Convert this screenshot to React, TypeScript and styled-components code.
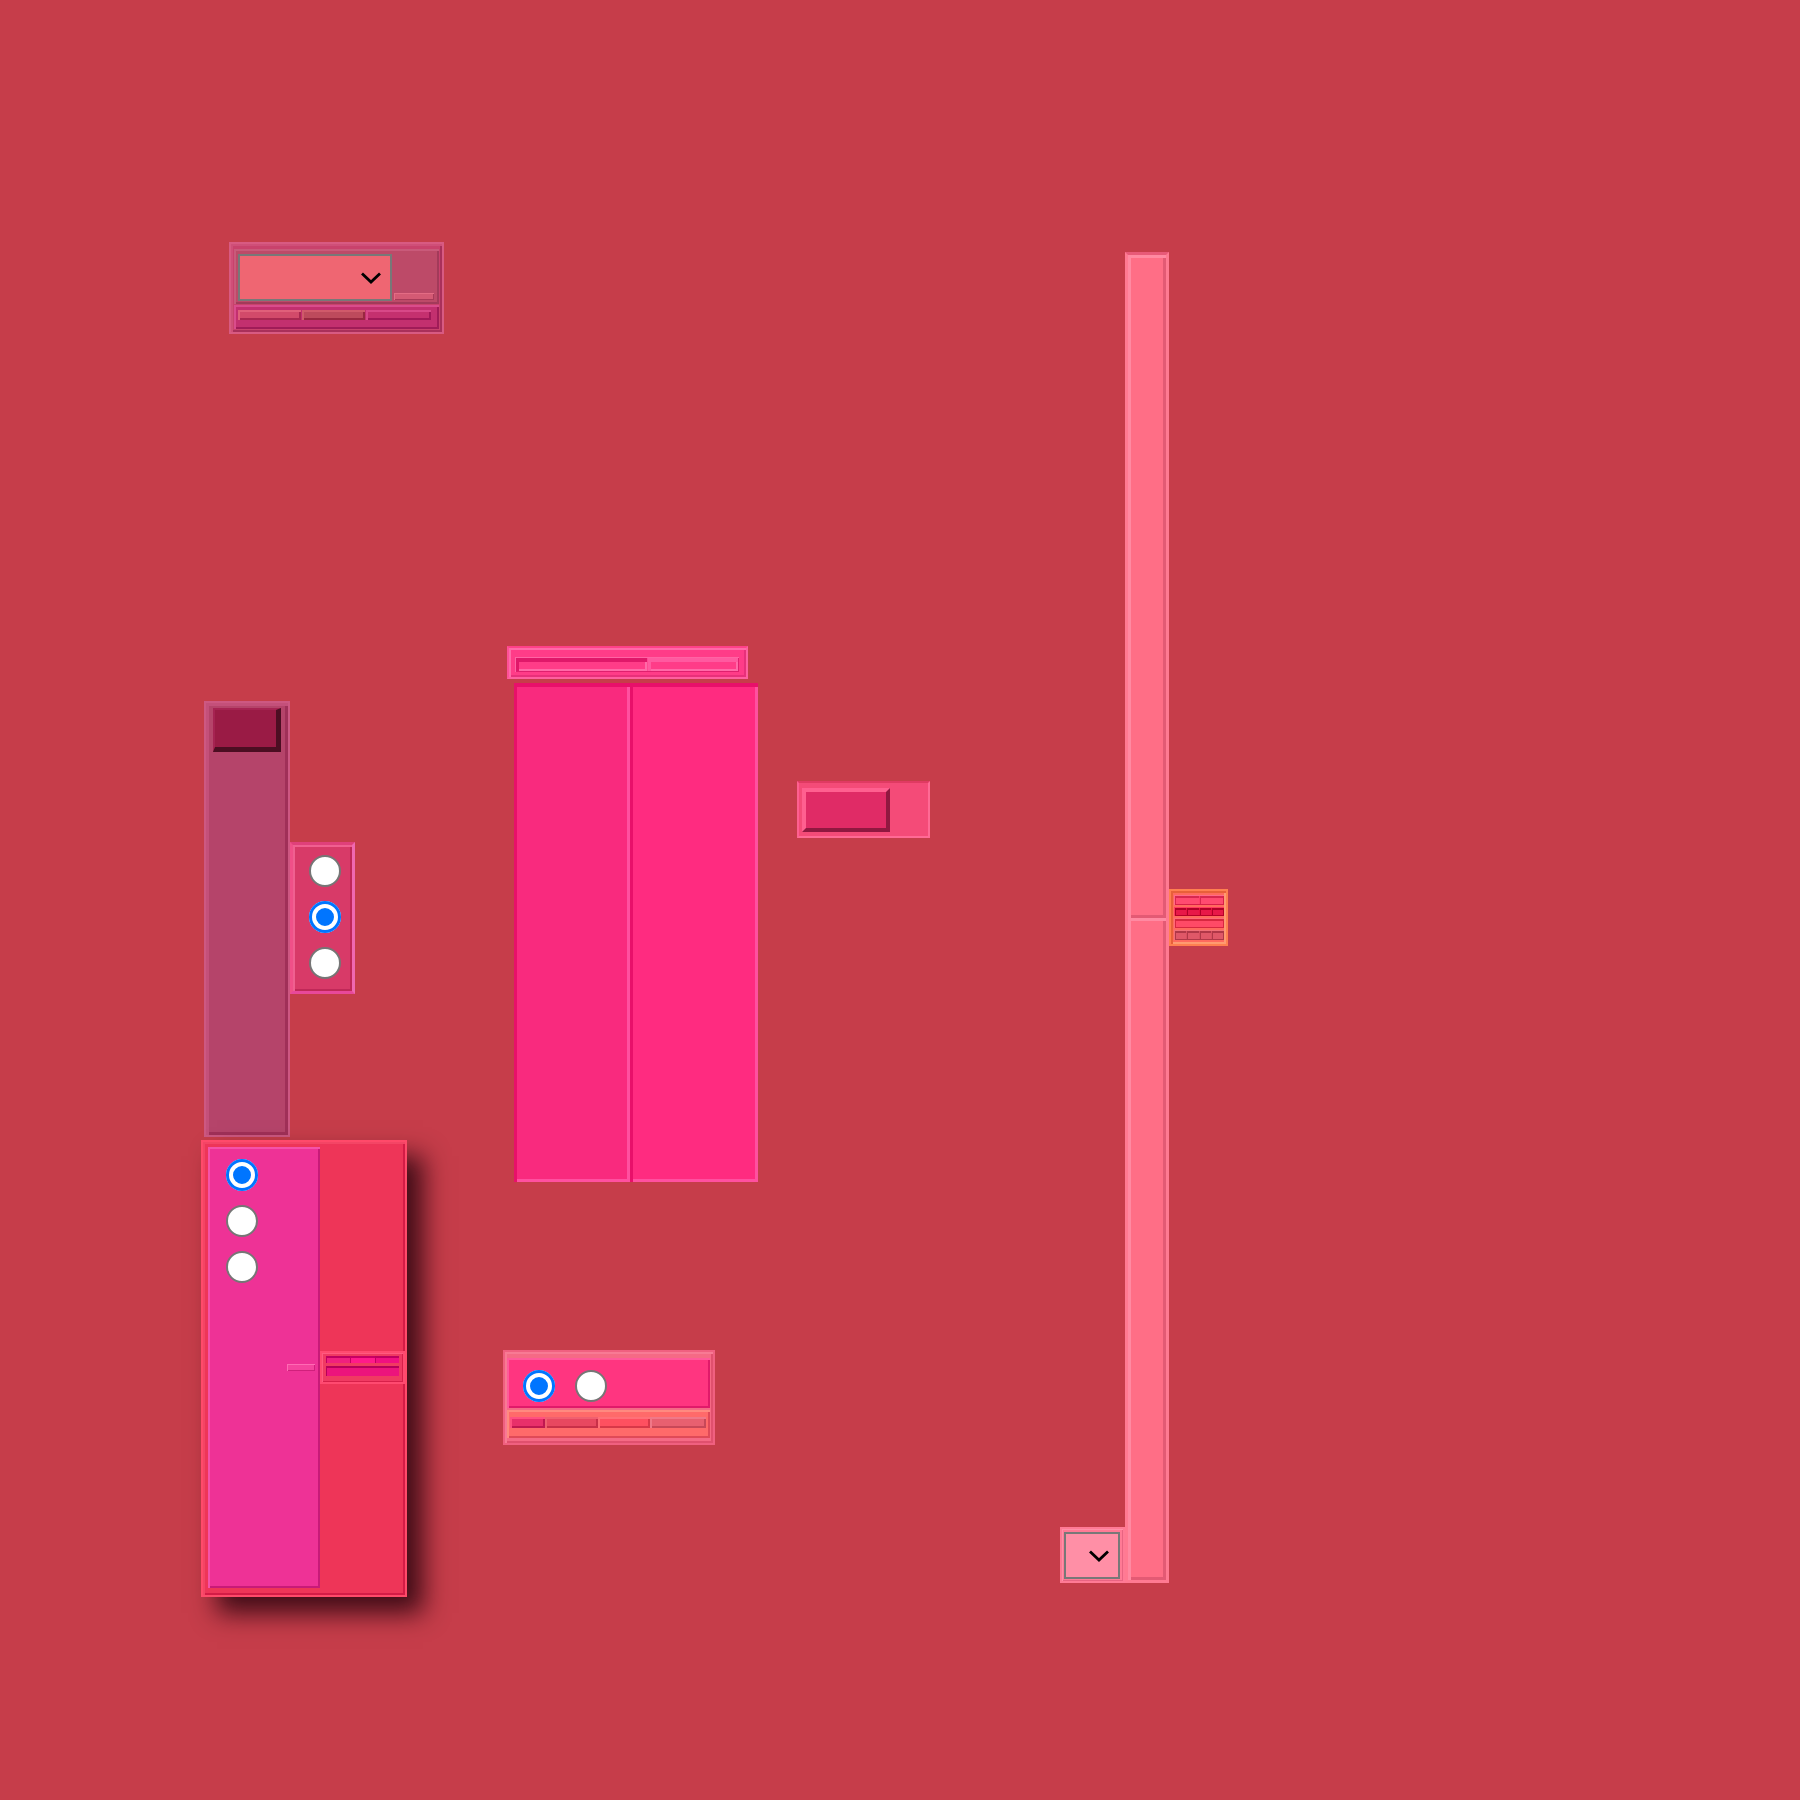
import React from "react";
import styled, { createGlobalStyle, css } from "styled-components";

const bevel = (light: string, dark: string, w = 2) => css`
  box-shadow: inset ${w}px ${w}px 0 ${light}, inset -${w}px -${w}px 0 ${dark};
`;

const Global = createGlobalStyle`
  html, body { margin: 0; padding: 0; background: #c63d4a; }
  body { font-family: "Liberation Sans", Arial, sans-serif; }
`;

const Canvas = styled.div`
  position: relative;
  width: 1800px;
  height: 1800px;
  background: #c63d4a;
  overflow: hidden;
`;

const Spot = styled.div<{ $x: number; $y: number }>`
  position: absolute;
  left: ${(p) => p.$x}px;
  top: ${(p) => p.$y}px;
`;

/* ---------- shared bits ---------- */
const Radio = styled.span<{ $on?: boolean }>`
  box-sizing: border-box;
  display: block;
  flex: none;
  width: 32px;
  height: 32px;
  border-radius: 50%;
  ${(p) =>
    p.$on
      ? css`
          background: #0075ff;
          box-shadow: inset 0 0 0 3px #0075ff, inset 0 0 0 7px #ffffff;
        `
      : css`
          background: #ffffff;
          border: 2px solid #767676;
        `}
`;

const SelectBox = styled.div<{ $w: number; $bg: string }>`
  box-sizing: border-box;
  flex: none;
  width: ${(p) => p.$w}px;
  border: 2px solid #787878;
  background: ${(p) => p.$bg};
  display: flex;
  align-items: center;
  justify-content: flex-end;
  padding-right: 8px;
`;

const Chip = styled.div<{ $grow: number; $bg: string; $light: string; $dark: string }>`
  flex: ${(p) => p.$grow} 1 0;
  background: ${(p) => p.$bg};
  ${(p) => bevel(p.$light, p.$dark, 2)}
`;

const Chevron = () => (
  <svg width="22" height="13" viewBox="0 0 22 13">
    <polyline points="2,2.5 11,11 20,2.5" fill="none" stroke="#000" strokeWidth="2.8" />
  </svg>
);

/* ---------- top-left filter card ---------- */
const FilterCard = styled.div`
  box-sizing: border-box;
  width: 215px;
  height: 92px;
  border: 2px solid #d85a82;
  background: #c9426c;
  ${bevel("#cf4f78", "#a9305a", 2)}
  padding: 5px 3px 3px 3px;
  display: flex;
  flex-direction: column;
  gap: 1px;
`;

const FilterTop = styled.div`
  flex: 1;
  display: flex;
  background: #bd4a68;
  ${bevel("#c95a7a", "#a33a5a", 2)}
  padding: 5px 3px 3px 4px;
`;

const FilterSide = styled.div`
  flex: 1;
  display: flex;
  align-items: flex-end;
  padding: 0 2px 1px 2px;
`;

const SideBar = styled.div`
  flex: 1;
  height: 7px;
  background: #d45a74;
  ${bevel("#e46c84", "#a83a58", 1)}
`;

const FilterBottom = styled.div`
  flex: none;
  height: 24px;
  box-sizing: border-box;
  background: #c3306f;
  ${bevel("#da4c8c", "#a01c58", 2)}
  padding: 5px 8px 0 4px;
  display: flex;
  align-items: flex-start;
  gap: 1px;
  & > div { height: 10px; }
`;

/* ---------- left slider track ---------- */
const TrackFrame = styled.div`
  box-sizing: border-box;
  width: 86px;
  height: 436px;
  border: 2px solid #cd5882;
  background: #b5446a;
  ${bevel("#c4507a", "#a03058", 3)}
  padding: 5px 7px;
`;

const TrackThumb = styled.div`
  box-sizing: border-box;
  height: 44px;
  background: #9a1b45;
  border-style: solid;
  border-width: 2px 5px 5px 2px;
  border-color: #a62352 #4c0e22 #4c0e22 #a62352;
`;

/* ---------- radio column panel ---------- */
const RadioPanel = styled.div`
  box-sizing: border-box;
  width: 65px;
  height: 152px;
  background: #d83a68;
  border: 3px solid;
  border-color: #e0407a #f068b0 #e8489a #f05088;
  ${bevel("#f06090", "#c02858", 2)}
  padding: 10px 0 0 5px;
  display: flex;
  flex-direction: column;
  align-items: center;
  gap: 14px;
`;

/* ---------- bottom-left drawer ---------- */
const Drawer = styled.div`
  box-sizing: border-box;
  width: 206px;
  height: 457px;
  background: #ee3558;
  border: 2px solid #ff4a6a;
  box-shadow: inset 2px 2px 0 #f44565, inset -2px -2px 0 #d41c46,
    16px 16px 24px rgba(40, 4, 14, 0.85);
  padding: 5px 0 7px 5px;
  display: flex;
`;

const DrawerList = styled.div`
  box-sizing: border-box;
  flex: none;
  width: 112px;
  background: #ee3296;
  ${bevel("#f552a8", "#c81a78", 2)}
  display: flex;
  justify-content: space-between;
  align-items: center;
  padding: 0 5px 0 18px;
`;

const RadioStack = styled.div`
  align-self: flex-start;
  margin-top: 12px;
  display: flex;
  flex-direction: column;
  gap: 14px;
`;

const Nub = styled.div`
  width: 28px;
  height: 7px;
  background: #f5449e;
  ${bevel("#ff6ab4", "#d0207c", 1)}
`;

const DrawerSide = styled.div`
  flex: 1;
  display: flex;
  align-items: center;
`;

const DrawerTray = styled.div`
  box-sizing: border-box;
  flex: 1;
  height: 33px;
  background: #f03a62;
  border: 2px solid #ff4a70;
  ${bevel("#ff5a80", "#d8204a", 1)}
  padding: 3px 4px;
  display: flex;
  flex-direction: column;
  gap: 3px;
`;

const TrayRow = styled.div<{ $h: number }>`
  height: ${(p) => p.$h}px;
  display: flex;
  background: #e8107a;
  ${bevel("#ff3a9a", "#b8005c", 1)}
`;

/* ---------- center rail ---------- */
const Rail = styled.div`
  box-sizing: border-box;
  width: 241px;
  height: 33px;
  background: #ff3c88;
  border: 2px solid;
  border-color: #ff4088 #ff60a0 #ff60a0 #ff5098;
  ${bevel("#ff6aa8", "#e8307a", 2)}
  padding: 9px 7px 5px 6px;
  display: flex;
`;

const RailStrip = styled.div`
  flex: 1;
  display: flex;
  background: #ff4a92;
  ${bevel("#ff64a4", "#e0206e", 1)}
  padding: 1px;
  gap: 1px;
`;

const RailSeg = styled.div<{ $grow: number; $dark: string }>`
  flex: ${(p) => p.$grow} 1 0;
  background: #ff3c88;
  box-shadow: inset 3px 4px 0 ${(p) => p.$dark}, inset -2px -2px 0 #ff6aa8;
`;

/* ---------- center columns ---------- */
const Columns = styled.div`
  display: flex;
  width: 244px;
  height: 499px;
`;

const Column = styled.div<{ $w: number; $bg: string }>`
  flex: none;
  width: ${(p) => p.$w}px;
  background: ${(p) => p.$bg};
  box-shadow: inset 3px 4px 0 #e8106a, inset -3px -3px 0 #ff50a0;
`;

/* ---------- small toggle ---------- */
const ToggleBox = styled.div`
  box-sizing: border-box;
  width: 133px;
  height: 57px;
  background: #f44b78;
  border: 2px solid;
  border-color: #e03a62 #ff6a95 #ff6a95 #ff6090;
  padding: 5px 0 4px 3px;
  display: flex;
`;

const ToggleKnob = styled.div`
  box-sizing: border-box;
  width: 88px;
  background: #e02b66;
  border-style: solid;
  border-width: 4px;
  border-color: #ff6090 #901840 #901840 #ff6090;
`;

/* ---------- bottom choice card ---------- */
const ChoiceCard = styled.div`
  box-sizing: border-box;
  width: 212px;
  height: 95px;
  background: #f56a85;
  border: 2px solid #f06080;
  ${bevel("#f87a94", "#e0506e", 2)}
  padding: 6px 3px 5px 2px;
  display: flex;
  flex-direction: column;
  gap: 2px;
`;

const ChoiceTop = styled.div`
  box-sizing: border-box;
  height: 50px;
  background: #ff3580;
  ${bevel("#ff5a9a", "#e01a6a", 2)}
  display: flex;
  align-items: center;
  padding: 6px 0 0 16px;
  gap: 20px;
`;

const ChoiceBottom = styled.div`
  flex: 1;
  background: #ff6a6a;
  ${bevel("#ff8a80", "#e04a58", 2)}
  padding: 7px 4px 0 3px;
  display: flex;
  align-items: flex-start;
  & > div { height: 11px; }
`;

/* ---------- right group ---------- */
const RightGroup = styled.div`
  display: flex;
  align-items: center;
`;

const DropWrap = styled.div`
  align-self: flex-end;
  box-sizing: border-box;
  width: 65px;
  height: 56px;
  background: #ff7a95;
  border: 2px solid #ff7a95;
  ${bevel("#ff90a8", "#e86482", 1)}
  padding: 3px 3px 2px 2px;
  display: flex;
`;

const TallBar = styled.div`
  box-sizing: border-box;
  width: 44px;
  height: 1331px;
  border: 3px solid;
  border-color: #e85a78 #ff7a92 #ff7a92 #ff7a92;
  display: flex;
  flex-direction: column;
`;

const TallPane = styled.div`
  flex: 1;
  background: #ff6e86;
  ${bevel("#ff8aa2", "#e35a74", 3)}
`;

const BadgeBox = styled.div`
  box-sizing: border-box;
  width: 59px;
  height: 57px;
  background: #ff6a5e;
  border: 2px solid #ff8050;
  ${bevel("#e8603a", "#ff9a70", 2)}
  padding: 4px 2px 4px 3px;
  display: flex;
  flex-direction: column;
  gap: 2px;
`;

const BadgeRow = styled.div<{ $h: number; $bg: string; $light: string; $dark: string }>`
  box-sizing: border-box;
  height: ${(p) => p.$h}px;
  flex: none;
  display: flex;
  gap: 1px;
  padding: 1px;
  background: ${(p) => p.$bg};
  ${(p) => bevel(p.$light, p.$dark, 1)}
`;

const BadgeSeg = styled.div<{ $bg: string; $line: string }>`
  flex: 1;
  background: ${(p) => p.$bg};
  box-shadow: inset 1px 2px 0 ${(p) => p.$line};
`;

export default function App() {
  return (
    <>
      <Global />
      <Canvas>
        <Spot $x={229} $y={242}>
          <FilterCard>
            <FilterTop>
              <SelectBox $w={154} $bg="#ef6672">
                <Chevron />
              </SelectBox>
              <FilterSide>
                <SideBar />
              </FilterSide>
            </FilterTop>
            <FilterBottom>
              <Chip $grow={63} $bg="#d24a6a" $light="#e0607a" $dark="#a82850" />
              <Chip $grow={62} $bg="#bd4a5c" $light="#d05a6a" $dark="#982840" />
              <Chip $grow={65} $bg="#c5306f" $light="#d84888" $dark="#a01858" />
            </FilterBottom>
          </FilterCard>
        </Spot>

        <Spot $x={204} $y={701}>
          <TrackFrame>
            <TrackThumb />
          </TrackFrame>
        </Spot>

        <Spot $x={290} $y={842}>
          <RadioPanel>
            <Radio />
            <Radio $on />
            <Radio />
          </RadioPanel>
        </Spot>

        <Spot $x={201} $y={1140}>
          <Drawer>
            <DrawerList>
              <RadioStack>
                <Radio $on />
                <Radio />
                <Radio />
              </RadioStack>
              <Nub />
            </DrawerList>
            <DrawerSide>
              <DrawerTray>
                <TrayRow $h={7}>
                  <BadgeSeg $bg="#f0207e" $line="#c00060" />
                  <BadgeSeg $bg="#ff1a8a" $line="#c80064" />
                  <BadgeSeg $bg="#f01080" $line="#c00060" />
                </TrayRow>
                <TrayRow $h={10}>
                  <BadgeSeg $bg="#ec147c" $line="#b8005a" />
                </TrayRow>
              </DrawerTray>
            </DrawerSide>
          </Drawer>
        </Spot>

        <Spot $x={507} $y={646}>
          <Rail>
            <RailStrip>
              <RailSeg $grow={133} $dark="#e0186a" />
              <RailSeg $grow={91} $dark="#ff5aa0" />
            </RailStrip>
          </Rail>
        </Spot>

        <Spot $x={514} $y={683}>
          <Columns>
            <Column $w={116} $bg="#f92a7e" />
            <Column $w={128} $bg="#ff2b80" />
          </Columns>
        </Spot>

        <Spot $x={797} $y={781}>
          <ToggleBox>
            <ToggleKnob />
          </ToggleBox>
        </Spot>

        <Spot $x={503} $y={1350}>
          <ChoiceCard>
            <ChoiceTop>
              <Radio $on />
              <Radio />
            </ChoiceTop>
            <ChoiceBottom>
              <Chip $grow={35} $bg="#e8306a" $light="#ff5080" $dark="#c01850" />
              <Chip $grow={53} $bg="#e84860" $light="#f06070" $dark="#c83048" />
              <Chip $grow={51} $bg="#ff5060" $light="#ff7078" $dark="#d83848" />
              <Chip $grow={56} $bg="#e86070" $light="#f07888" $dark="#c84858" />
            </ChoiceBottom>
          </ChoiceCard>
        </Spot>

        <Spot $x={1060} $y={252}>
          <RightGroup>
            <DropWrap>
              <SelectBox $w={56} $bg="#ff8fa6">
                <Chevron />
              </SelectBox>
            </DropWrap>
            <TallBar>
              <TallPane />
              <TallPane />
            </TallBar>
            <BadgeBox>
              <BadgeRow $h={10} $bg="#ff3f6a" $light="#ff6a88" $dark="#d82048">
                <BadgeSeg $bg="#ff4a70" $line="#d82850" />
                <BadgeSeg $bg="#ff4a70" $line="#d82850" />
              </BadgeRow>
              <BadgeRow $h={9} $bg="#e8103f" $light="#ff3a60" $dark="#b80028">
                <BadgeSeg $bg="#e81848" $line="#b00028" />
                <BadgeSeg $bg="#e81848" $line="#b00028" />
                <BadgeSeg $bg="#e81848" $line="#b00028" />
                <BadgeSeg $bg="#e81848" $line="#b00028" />
              </BadgeRow>
              <BadgeRow $h={10} $bg="#ff4560" $light="#ff6a78" $dark="#d82840">
                <BadgeSeg $bg="#ff4a66" $line="#d82840" />
              </BadgeRow>
              <BadgeRow $h={10} $bg="#d85060" $light="#f07078" $dark="#b03848">
                <BadgeSeg $bg="#e05868" $line="#b03848" />
                <BadgeSeg $bg="#e05868" $line="#b03848" />
                <BadgeSeg $bg="#e05868" $line="#b03848" />
                <BadgeSeg $bg="#e05868" $line="#b03848" />
              </BadgeRow>
            </BadgeBox>
          </RightGroup>
        </Spot>
      </Canvas>
    </>
  );
}
